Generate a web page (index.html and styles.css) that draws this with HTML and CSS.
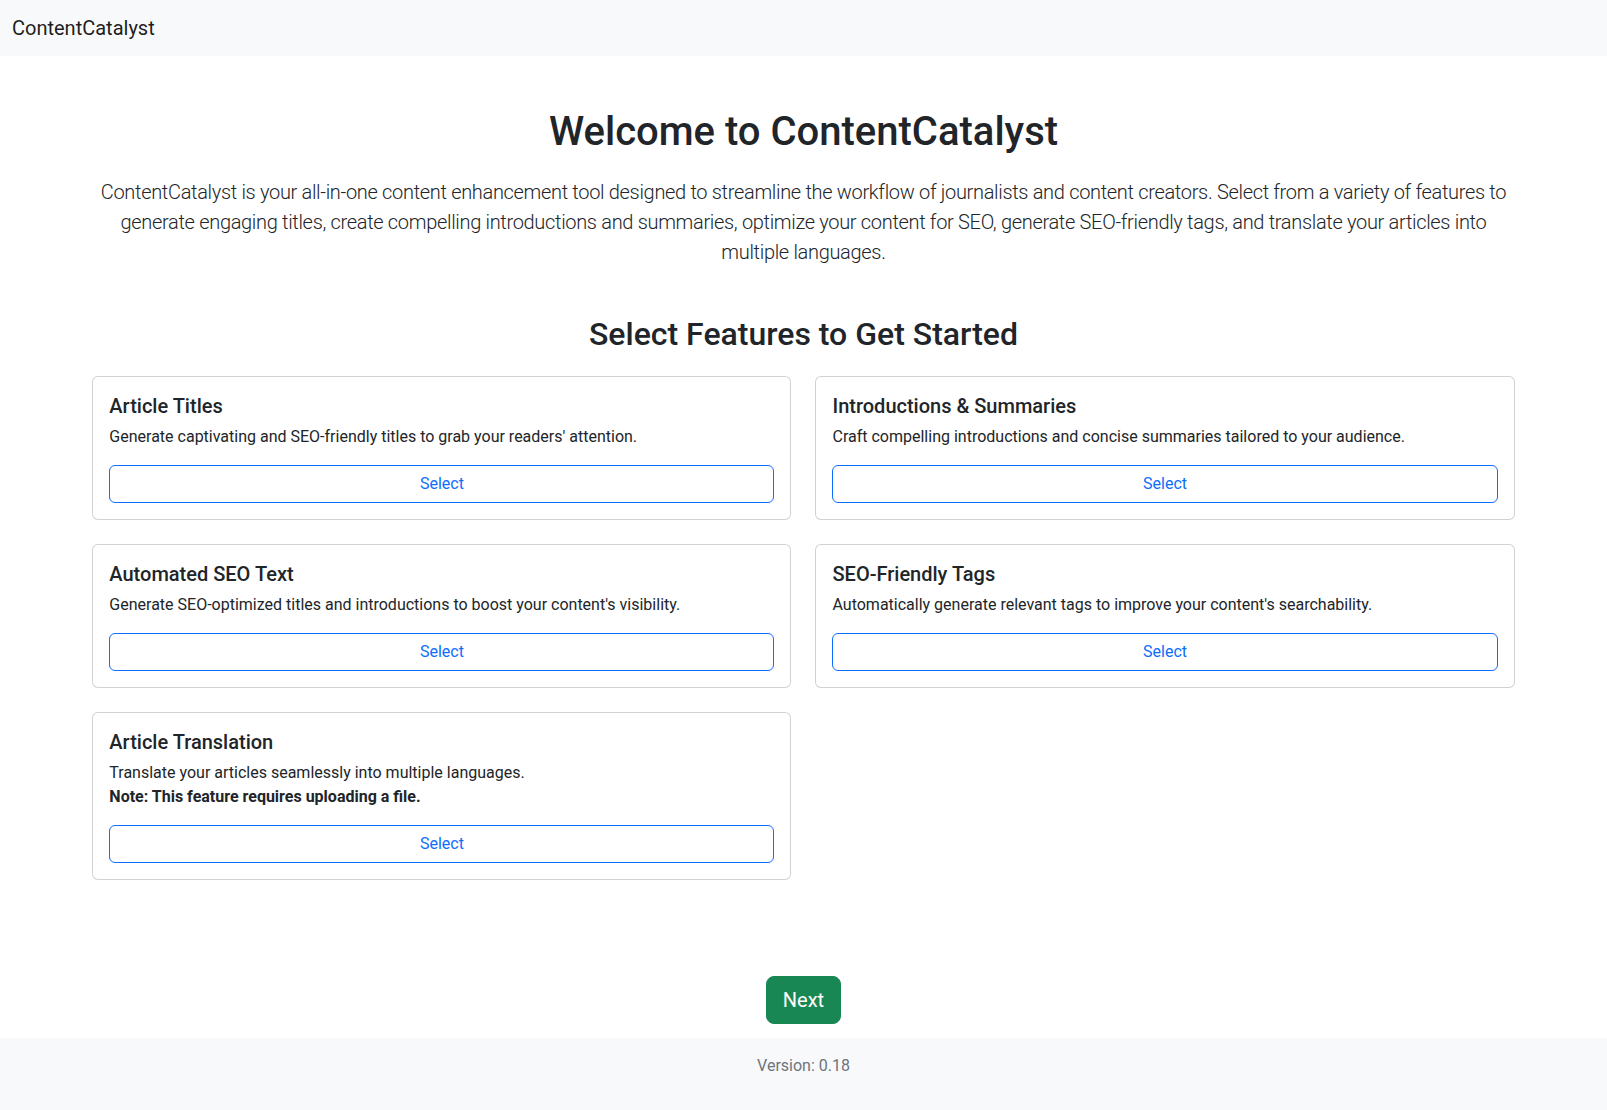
FILE: index.html
```html
<!DOCTYPE html>
<html lang="en">
<head>
<meta charset="utf-8">
<title>ContentCatalyst</title>
<link rel="stylesheet" href="styles.css">
</head>
<body>
<nav class="navbar">
  <a class="brand" href="#">ContentCatalyst</a>
</nav>
<main class="main">
  <div class="container">
    <h1 class="title">Welcome to ContentCatalyst</h1>
    <p class="lead">ContentCatalyst is your all-in-one content enhancement tool designed to streamline the workflow of journalists and content creators. Select from a variety of features to generate engaging titles, create compelling introductions and summaries, optimize your content for SEO, generate SEO-friendly tags, and translate your articles into multiple languages.</p>
    <h2 class="subtitle">Select Features to Get Started</h2>
    <div class="grid">
      <div class="card">
        <h5 class="card-title">Article Titles</h5>
        <p class="card-text">Generate captivating and SEO-friendly titles to grab your readers' attention.</p>
        <button class="btn-outline">Select</button>
      </div>
      <div class="card">
        <h5 class="card-title">Introductions &amp; Summaries</h5>
        <p class="card-text">Craft compelling introductions and concise summaries tailored to your audience.</p>
        <button class="btn-outline">Select</button>
      </div>
      <div class="card">
        <h5 class="card-title">Automated SEO Text</h5>
        <p class="card-text">Generate SEO-optimized titles and introductions to boost your content's visibility.</p>
        <button class="btn-outline">Select</button>
      </div>
      <div class="card">
        <h5 class="card-title">SEO-Friendly Tags</h5>
        <p class="card-text">Automatically generate relevant tags to improve your content's searchability.</p>
        <button class="btn-outline">Select</button>
      </div>
      <div class="card">
        <h5 class="card-title">Article Translation</h5>
        <p class="card-text">Translate your articles seamlessly into multiple languages.<br><strong>Note: This feature requires uploading a file.</strong></p>
        <button class="btn-outline">Select</button>
      </div>
    </div>
  </div>
  <div class="next-wrap">
    <button class="btn-next">Next</button>
  </div>
</main>
<footer class="footer">
  <p class="version">Version: 0.18</p>
</footer>
</body>
</html>
```

FILE: styles.css
```css
* { box-sizing: border-box; }
html, body { margin: 0; padding: 0; }
body {
  font-family: Roboto, "Liberation Sans", Arial, sans-serif;
  font-size: 16px;
  line-height: 1.5;
  color: #212529;
  background: #fff;
  min-height: 100vh;
  display: flex;
  flex-direction: column;
}
.navbar {
  background: #f8f9fa;
  padding: 8px 12px;
  display: flex;
  align-items: center;
}
.brand {
  font-size: 20px;
  line-height: 30px;
  padding: 5px 0;
  color: rgba(0,0,0,.9);
  text-decoration: none;
}
.main {
  flex: 1;
  display: flex;
  flex-direction: column;
}
.container {
  width: 90%;
  margin: 48px auto 0;
  padding: 0 12px;
}
.title {
  font-size: 40px;
  font-weight: 500;
  line-height: 1.2;
  text-align: center;
  margin: 0;
  padding-top: 4px;
  margin-bottom: 20px;
}
.lead {
  font-size: 20px;
  font-weight: 300;
  line-height: 1.5;
  letter-spacing: -0.32px;
  text-align: center;
  margin: 0;
  padding-top: 1px;
  margin-bottom: 47px;
}
.subtitle {
  font-size: 32px;
  font-weight: 500;
  line-height: 1.2;
  text-align: center;
  margin: 0;
  padding-top: 1px;
  margin-bottom: 23px;
}
.grid {
  display: grid;
  grid-template-columns: 1fr 1fr;
  gap: 24px;
  margin-bottom: 24px;
  align-items: start;
}
.card {
  border: 1px solid rgba(0,0,0,.175);
  border-radius: 6px;
  padding: 16px;
  background: #fff;
}
.card-title {
  font-size: 20px;
  font-weight: 500;
  line-height: 1.2;
  margin: 0;
  padding-top: 1px;
  margin-bottom: 7px;
}
.card-text {
  margin: 0 0 16px;
}
.card-text strong { font-weight: 700; }
.btn-outline {
  display: block;
  width: 100%;
  font-family: inherit;
  font-size: 16px;
  line-height: 1.5;
  padding: 6px 12px;
  color: #0d6efd;
  background: transparent;
  border: 1px solid #0d6efd;
  border-radius: 6px;
  cursor: pointer;
}
.next-wrap {
  margin-top: auto;
  margin-bottom: 14px;
  text-align: center;
}
.btn-next {
  font-family: inherit;
  font-size: 20px;
  line-height: 1.5;
  padding: 8px 16px;
  color: #fff;
  background: #198754;
  border: 1px solid #198754;
  border-radius: 8px;
  cursor: pointer;
}
.footer {
  background: #f8f9fa;
  padding: 16px 0;
  text-align: center;
}
.version {
  margin: 0 0 16px;
  color: #6c757d;
}
```
